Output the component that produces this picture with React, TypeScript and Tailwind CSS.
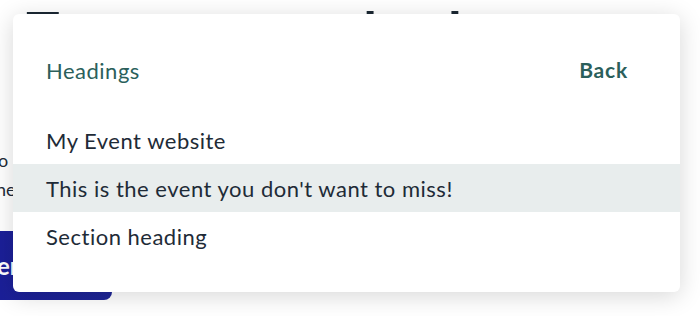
import React from 'react';

const ITEMS = ['My Event website', "This is the event you don't want to miss!", 'Section heading'];

export default function App() {
  const active = 1;
  return (
    <div className="relative h-[316px] w-[700px] overflow-hidden bg-white font-['Lato',sans-serif] text-[#1e2b37]">
      {/* Page behind the menu */}
      <div className="flex flex-col">
        <h1 className="-mt-[1px] ml-[26px] h-[67px] whitespace-nowrap text-[56px] font-bold leading-[64px] text-[#1b2833]">
          Tour summer bash
        </h1>
        <p className="mt-[80px] whitespace-nowrap text-[18px] leading-[29px] -ml-[2px]">
          o register for the event, fill in the form below and we will get back to you with any ever
        </p>
        <p className="whitespace-nowrap text-[18px] leading-[29px] -ml-[4px]">he team</p>
        <div className="mt-[27px] flex h-[69px] w-[112px] items-center rounded-br-lg bg-gradient-to-r from-[#1b1f98] to-[#1e2596]">
          <span className="-ml-[3px] text-[24px] font-bold text-white">er</span>
        </div>
      </div>

      {/* Dropdown menu */}
      <div className="absolute left-[13px] top-[14px] w-[667px] rounded-md bg-white pb-8 pt-8 tracking-[0.5px] shadow-[0_4px_24px_rgba(0,0,0,0.16)]">
        <div className="flex h-12 items-center justify-between pl-[33px] pr-[52px]">
          <span className="text-[22px] text-[#2b5f5b]">Headings</span>
          <button className="text-[21px] font-bold tracking-[0.8px] text-[#2b5f5b]">Back</button>
        </div>
        <ul className="mt-[22px] flex flex-col">
          {ITEMS.map((item, i) => (
            <li
              key={item}
              className={`flex h-12 items-center pl-[33px] text-[22px] ${i === active ? 'bg-[#e8eded]' : ''}`}
            >
              {item}
            </li>
          ))}
        </ul>
      </div>
    </div>
  );
}
